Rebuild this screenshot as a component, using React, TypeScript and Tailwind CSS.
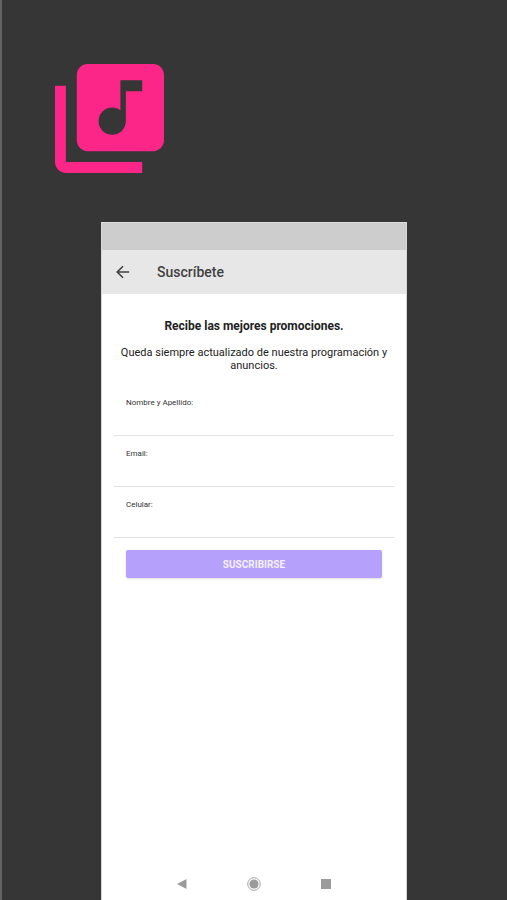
import React from "react";

const fields = [
  { id: "nombre", label: "Nombre y Apellido:", type: "text" },
  { id: "email", label: "Email:", type: "email" },
  { id: "celular", label: "Celular:", type: "tel" },
];

function LibraryMusicIcon() {
  return (
    <svg viewBox="2 2 20 20" className="size-[109px] fill-[#fc2588]" aria-hidden="true">
      <path d="M20 2H8c-1.1 0-2 .9-2 2v12c0 1.1.9 2 2 2h12c1.1 0 2-.9 2-2V4c0-1.1-.9-2-2-2zm-2 5h-3v5.5c0 1.38-1.12 2.5-2.5 2.5S10 13.88 10 12.5s1.12-2.5 2.5-2.5c.57 0 1.08.19 1.5.51V5h4v2zM4 6H2v14c0 1.1.9 2 2 2h14v-2H4V6z" />
    </svg>
  );
}

function NavigationBar() {
  return (
    <nav className="flex h-8 items-center justify-between px-[75px]" aria-label="Sistema">
      <button type="button" aria-label="Atrás">
        <svg viewBox="0 0 10 10" className="size-[10px] fill-[#9b9b9b]">
          <path d="M0 5 9.5 0v10z" />
        </svg>
      </button>
      <button type="button" aria-label="Inicio">
        <svg viewBox="0 0 14 14" className="size-[14px]">
          <circle cx="7" cy="7" r="6.3" fill="none" stroke="#a5a5a5" strokeWidth="1" />
          <circle cx="7" cy="7" r="4.6" fill="#9b9b9b" />
        </svg>
      </button>
      <button type="button" aria-label="Recientes">
        <svg viewBox="0 0 10 10" className="size-[10px] fill-[#9b9b9b]">
          <path d="M0 0h10v10H0z" />
        </svg>
      </button>
    </nav>
  );
}

export default function App() {
  return (
    <div className="flex min-h-screen flex-col border-l-2 border-[#626262] bg-[#363636] pt-16 font-['Roboto',sans-serif]">
      <div className="pl-[53px]">
        <LibraryMusicIcon />
      </div>
      <main className="mr-[100px] ml-[99px] mt-[49px] flex grow flex-col border-x border-[#d8d8d8] bg-white">
        <div className="h-7 border-t border-[#dedede] bg-[#cdcdcd]" />
        <header className="flex h-11 items-center bg-[#e7e7e7] pl-[14px]">
          <button type="button" aria-label="Volver">
            <svg viewBox="0 0 14 14" className="size-[14px]" fill="none" stroke="#414141" strokeWidth="1.6">
              <path d="M13.2 7H1.5M7 1.2 1.2 7 7 12.8" />
            </svg>
          </button>
          <h1 className="pl-[27px] text-sm font-medium text-[#414141]">Suscríbete</h1>
        </header>
        <section className="px-3 pt-6 text-center text-[#222222]">
          <h2 className="text-xs leading-4 font-bold">Recibe las mejores promociones.</h2>
          <p className="mt-3 text-[11px] leading-[13px]">
            Queda siempre actualizado de nuestra programación y anuncios.
          </p>
        </section>
        <form className="flex flex-col pt-[13px]" onSubmit={(e) => e.preventDefault()}>
          {fields.map((field) => (
            <div key={field.id} className="mx-3 flex h-[51px] flex-col border-b border-[#e3e3e3] px-3 pt-3">
              <label htmlFor={field.id} className="text-[8px] leading-3 text-[#333333]">
                {field.label}
              </label>
              <input id={field.id} type={field.type} className="w-full grow text-[11px] outline-none" />
            </div>
          ))}
          <button
            type="submit"
            className="mx-6 mt-3 h-7 rounded-xs bg-[#b5a1fb] text-[10px] font-bold text-[#f4f0ff] shadow-sm"
          >
            SUSCRIBIRSE
          </button>
        </form>
        <div className="grow" />
        <NavigationBar />
      </main>
    </div>
  );
}
